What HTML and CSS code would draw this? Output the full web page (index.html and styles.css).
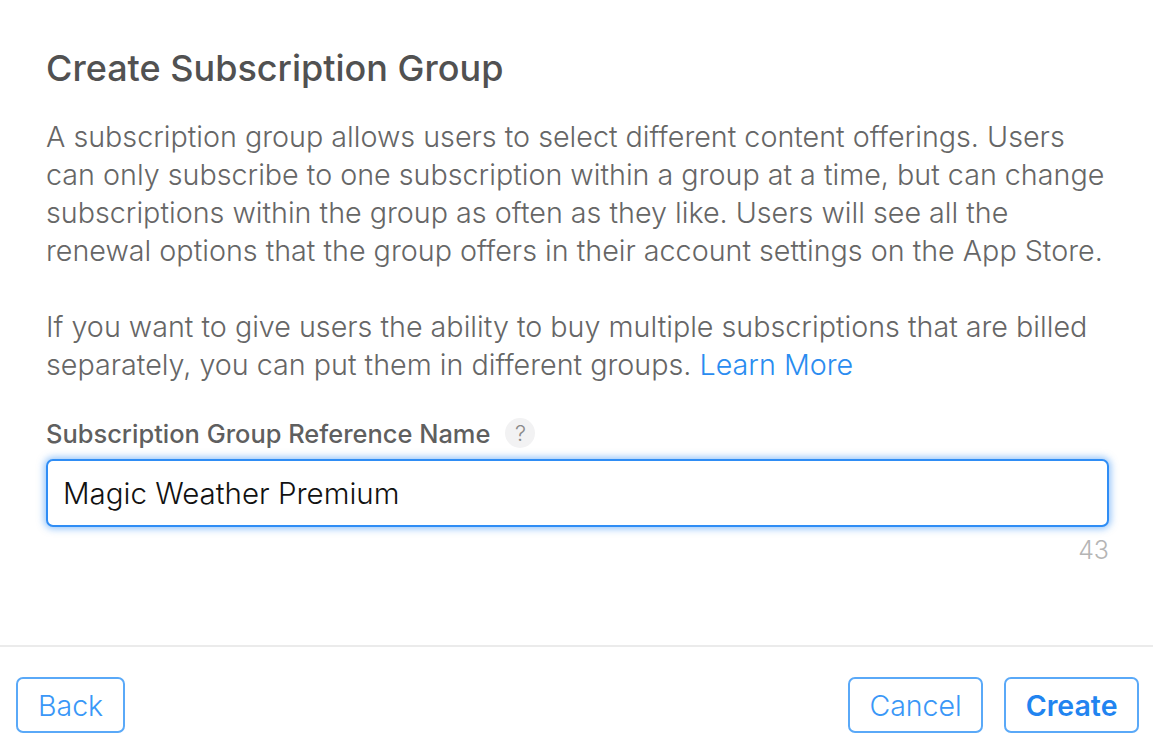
FILE: index.html
```html
<!DOCTYPE html>
<html lang="en">
  <head>
    <meta charset="UTF-8" />
    <title>Create Subscription Group</title>
    <link rel="stylesheet" href="styles.css">
  </head>
  <body>
    <div class="modal">
      <div class="content">
        <h1>Create Subscription Group</h1>
        <p class="intro">A subscription group allows users to select different content offerings. Users<br>can only subscribe to one subscription within a group at a time, but can change<br>subscriptions within the group as often as they like. Users will see all the<br>renewal options that the group offers in their account settings on the App Store.</p>
        <p class="intro second">If you want to give users the ability to buy multiple subscriptions that are billed<br>separately, you can put them in different groups. <a href="#">Learn More</a></p>
        <div class="label-row">
          <label for="group-name">Subscription Group Reference Name</label>
          <span class="help">?</span>
        </div>
        <input id="group-name" type="text" value="Magic Weather Premium" />
        <div class="counter">43</div>
      </div>
      <div class="footer">
        <button class="btn">Back</button>
        <div class="right">
          <button class="btn">Cancel</button>
          <button class="btn strong">Create</button>
        </div>
      </div>
    </div>
  </body>
</html>
```

FILE: styles.css
```css
* {
  margin: 0;
  padding: 0;
  box-sizing: border-box;
}

body {
  background-color: #fff;
  font-family: Inter, "Liberation Sans", sans-serif;
  width: 1153px;
  height: 749px;
  overflow: hidden;
}

.content {
  padding: 45px 44px 0 46px;
  height: 647px;
  border-bottom: 2px solid #ebebeb;
}

h1 {
  font-size: 36px;
  line-height: 46px;
  font-weight: 500;
  color: #515151;
  margin-bottom: 27px;
}

.intro {
  font-size: 28.7px;
  line-height: 38px;
  font-weight: 300;
  color: #666;
  white-space: nowrap;
}

.second {
  margin-top: 38px;
}

.intro a {
  color: #2a8cf0;
  font-weight: 300;
  text-decoration: none;
}

.label-row {
  display: flex;
  align-items: center;
  gap: 15px;
  margin-top: 31px;
  height: 36px;
}

label {
  font-size: 25.45px;
  font-weight: 500;
  color: #5f5f5f;
}

.help {
  width: 30px;
  height: 30px;
  border-radius: 50%;
  background-color: #f2f2f3;
  color: #8a8a8a;
  font-size: 22px;
  font-weight: 300;
  text-align: center;
  line-height: 30px;
}

input {
  display: block;
  width: 100%;
  height: 68px;
  margin-top: 8px;
  padding: 0 15px;
  font-family: inherit;
  font-size: 29.5px;
  font-weight: 300;
  color: #111;
  border: 2px solid #2f8df5;
  border-radius: 7px;
  box-shadow: 0 0 7px 2px rgba(47, 141, 245, 0.5);
  outline: none;
}

.counter {
  text-align: right;
  font-size: 25px;
  font-weight: 300;
  line-height: 32px;
  color: #b5b5b5;
  margin-top: 7px;
}

.footer {
  display: flex;
  justify-content: space-between;
  padding: 30px 14px 0 16px;
}

.right {
  display: flex;
  gap: 21px;
}

.btn {
  height: 56px;
  padding: 0 20px;
  background-color: #fff;
  border: 2px solid #5aa9f8;
  border-radius: 7px;
  color: #3a97f7;
  font-family: inherit;
  font-size: 28.5px;
  font-weight: 300;
}

.right .btn {
  padding: 0 19.5px;
}

.strong {
  font-weight: 600;
  color: #2184f0;
}
```
